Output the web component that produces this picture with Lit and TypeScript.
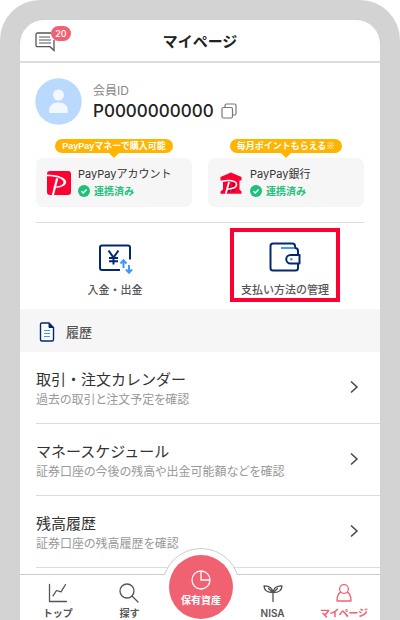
import { LitElement, html, css, svg } from "lit";
import { customElement } from "lit/decorators.js";

const check = html`<svg width="12" height="12" viewBox="0 0 12 12" aria-hidden="true">
  <circle cx="6" cy="6" r="6" fill="#1fc07a" />
  <path d="M3.4 6.2l1.8 1.8 3.4-3.6" fill="none" stroke="#fff" stroke-width="1.4" />
</svg>`;

const payLogo = html`<svg width="24" height="24" viewBox="0 0 24 24" aria-hidden="true">
  <rect width="24" height="24" rx="3" fill="#ff0033" />
  <path d="M0 3.500C9 3.500 19 6.200 19.200 10.900C19.300 15 12.500 17 6.500 16.600L6.700 15.600C12 15.700 16.600 14.200 16.500 11C16.300 7.300 8 5 0 5.200z" fill="#fff" />
  <path d="M9 7.200L11.300 7.400L7 24H4.800z" fill="#fff" />
</svg>`;

const bankLogo = html`<svg width="24" height="24" viewBox="0 0 24 24" aria-hidden="true">
  <path d="M12 1.500L22.500 6V9.500H20.500V18.500L22.500 20.500V22.800H1.500V20.500L4 18.500V9.500H1.500V6z" fill="#ff0033" />
  <path d="M8 12h3v9H8zM13 12h3v9h-3z" fill="#c80028" />
  <path d="M3.500 10.200C9 8.800 17.500 9.500 17.500 13.400C17.500 16.600 13 18.200 7.500 18" fill="none" stroke="#fff" stroke-width="1.500" />
  <path d="M10 11L6.800 22.800" fill="none" stroke="#fff" stroke-width="1.800" />
</svg>`;

const cards = [
  { tag: "PayPayマネーで購入可能", name: "PayPayアカウント", logo: payLogo },
  { tag: "毎月ポイントもらえる※", name: "PayPay銀行", logo: bankLogo },
];

const rows = [
  { title: "取引・注文カレンダー", note: "過去の取引と注文予定を確認" },
  { title: "マネースケジュール", note: "証券口座の今後の残高や出金可能額などを確認" },
  { title: "残高履歴", note: "証券口座の残高履歴を確認" },
];

const tabIcon = (shape: unknown) => html`<svg class="tab-icon" width="20" height="20" viewBox="0 0 20 20"
  fill="none" stroke="currentColor" stroke-width="1.300" stroke-linejoin="round" stroke-linecap="round" aria-hidden="true">${shape}</svg>`;

const icons = {
  chart: svg`<path d="M1.500 1.500V18.500H18.500M5 12.800L8.500 7.500L13 8.800L17.500 1.500" />`,
  search: svg`<circle cx="8" cy="8" r="7" /><path d="M13 13L19 19" />`,
  sprout: svg`<path d="M10 18.500V10C9.500 5 6 2.600 1 2.800C1 7.500 4.500 9.700 10 9.700C15.500 9.700 19 7.500 19 2.800C14 2.600 10.500 5 10 9.700M5.500 5.500L10 9.700L14.500 5.500" />`,
  person: svg`<circle cx="10" cy="6" r="4.400" /><path d="M6.800 9.200C4 10.600 3 13 3 18H17C17 13 16 10.600 13.200 9.200" />`,
};

@customElement("app-root")
export class AppRoot extends LitElement {
  static styles = css`
    :host {
      display: block;
      background: #fff;
      color: #333;
      font-family: Inter, "Noto Sans CJK JP", sans-serif;
    }
    * { box-sizing: border-box; }
    svg { display: block; flex: none; }
    h1, h2, p, ul, dl, dd { margin: 0; padding: 0; }
    ul { list-style: none; }
    a { color: inherit; text-decoration: none; }
    button {
      margin: 0; padding: 0; border: 0; background: none;
      color: inherit; font: inherit; cursor: pointer;
    }
    .bezel {
      min-height: 100vh;
      display: flex;
      padding: 20px 20px 0;
      background: #d3d3d3;
      border-radius: 40px 40px 0 0;
      overflow: hidden;
    }
    .screen {
      flex: 1;
      min-width: 0;
      display: flex;
      flex-direction: column;
      background: #fff;
      border-radius: 24px 24px 0 0;
      overflow: hidden;
    }
    .header {
      display: grid;
      grid-template-columns: 56px 1fr 56px;
      align-items: center;
      height: 43px;
      padding-top: 2px;
      border-bottom: 2px solid #ddd;
    }
    .header h1 {
      font-size: 15px;
      line-height: 20px;
      font-weight: 700;
      text-align: center;
      color: #222;
    }
    .messages { position: relative; width: 24px; margin-left: 14px; color: #555; }
    .badge {
      position: absolute;
      left: 17px;
      top: -6px;
      width: 20px;
      border-radius: 8px;
      background: #f06272;
      color: #fff;
      font-size: 9px;
      line-height: 15px;
      font-weight: 500;
      text-align: center;
    }
    .profile {
      display: flex;
      align-items: center;
      gap: 11px;
      padding: 15px 15px 14px;
    }
    .profile dt { font-size: 12px; line-height: 18px; color: #888; }
    .profile dd {
      display: flex;
      align-items: center;
      gap: 7px;
      font-size: 17px;
      line-height: 22px;
      font-weight: 500;
      color: #222;
    }
    .cards {
      display: grid;
      grid-template-columns: 1fr 1fr;
      gap: 16px;
      margin: 0 16px;
      padding-bottom: 15px;
      border-bottom: 1px solid #ddd;
    }
    .linked { display: flex; flex-direction: column; align-items: center; }
    .tag {
      padding: 0 7px;
      border-radius: 7px;
      background: #ffb400;
      color: #fff;
      font-family: "Liberation Sans", "Noto Sans CJK JP", sans-serif;
      font-size: 9px;
      line-height: 14px;
      font-weight: 700;
      white-space: nowrap;
    }
    .tip { border: 5px solid transparent; border-top-color: #ffb400; border-bottom: 0; }
    .card {
      align-self: stretch;
      display: flex;
      align-items: center;
      gap: 7px;
      height: 49px;
      padding: 0 11px;
      border-radius: 7px;
      background: #f6f6f6;
      text-align: left;
      font-size: 11px;
      line-height: 16px;
    }
    .card strong {
      display: flex;
      align-items: center;
      gap: 4px;
      font-size: 10px;
      line-height: 18px;
      color: #1fc07a;
      font-weight: 700;
    }
    .name, .state { display: block; white-space: nowrap; }
    .actions {
      display: grid;
      grid-template-columns: 1fr 1fr;
      justify-items: center;
      padding: 5px 10px 7px;
    }
    .action {
      display: flex;
      flex-direction: column;
      align-items: center;
      justify-content: space-between;
      width: 110px;
      height: 74px;
      padding: 10px 0 0;
      border: 4px solid transparent;
      font-size: 11px;
      line-height: 16px;
      font-weight: 500;
      color: #555;
      white-space: nowrap;
    }
    .marked { border-color: #ff0033; }
    .section {
      display: flex;
      align-items: center;
      gap: 10px;
      height: 43px;
      padding: 2px 18px 0;
      background: #f6f6f6;
      font-size: 13px;
      line-height: 20px;
      font-weight: 500;
      color: #555;
    }
    .row {
      display: flex;
      align-items: center;
      justify-content: space-between;
      height: 72px;
      margin-left: 16px;
      padding: 0 21px 1px 0;
      border-bottom: 1px solid #ddd;
      font-size: 15px;
      line-height: 22px;
    }
    .row small {
      display: block;
      font-feature-settings: "palt";
      font-size: 12px;
      line-height: 18px;
      color: #999;
    }
    .row span { display: block; padding-top: 3px; }
    .tabs {
      position: relative;
      display: grid;
      grid-template-columns: repeat(5, 1fr);
      height: 46px;
      margin-top: auto;
      padding-left: 2px;
      border-top: 1px solid #ccc;
      background: #fff;
    }
    .tab {
      display: flex;
      flex-direction: column;
      align-items: center;
      gap: 3px;
      padding-top: 8px;
      font-size: 10px;
      line-height: 14px;
      font-weight: 600;
      color: #555;
      white-space: nowrap;
    }
    .current { color: #f06272; font-feature-settings: "palt"; }
    .center { position: relative; }
    .ring {
      position: absolute;
      left: 50%;
      top: -27px;
      width: 78px;
      height: 78px;
      margin-left: -39px;
      border: 1px solid #ccc;
      border-radius: 50%;
      background: #fff;
      clip-path: inset(0 0 51px 0);
    }
    .plate {
      position: absolute;
      left: 50%;
      top: -20px;
      display: flex;
      flex-direction: column;
      align-items: center;
      gap: 3px;
      width: 64px;
      height: 64px;
      margin-left: -32px;
      padding-top: 15px;
      border-radius: 50%;
      background: #f06272;
      color: #fff;
      font-size: 10px;
      line-height: 14px;
      font-weight: 700;
      white-space: nowrap;
    }
  `;

  render() {
    return html`
      <div class="bezel">
        <div class="screen">
          <header class="header">
            <button class="messages" aria-label="お知らせ">
              <svg width="22" height="20" viewBox="0 0 22 20" fill="none" stroke="currentColor" stroke-width="1.300" aria-hidden="true">
                <path d="M20 8V18.500L16 14.700H3.500Q2 14.700 2 13.200V2.500Q2 1 3.500 1H17" />
                <path d="M5 5h11M5 8h12M5 11h12" stroke-width="1" />
              </svg>
              <span class="badge">20</span>
            </button>
            <h1>マイページ</h1>
          </header>
          <main>
            <div class="profile">
              <svg width="47" height="47" viewBox="0 0 47 47" aria-hidden="true">
                <circle cx="23.500" cy="23.500" r="23.200" fill="#b9d9ff" />
                <circle cx="23.500" cy="17" r="5.500" fill="#f3f8ff" />
                <path d="M14 33.500C14 27.500 17.500 24.500 23.500 24.500S33 27.500 33 33.500Q33 35 31.500 35H15.500Q14 35 14 33.500z" fill="#f3f8ff" />
              </svg>
              <dl>
                <dt>会員ID</dt>
                <dd>
                  P0000000000
                  <button aria-label="コピー">
                    <svg width="16" height="16" viewBox="0 0 16 16" fill="none" stroke="#777" stroke-width="1.200" aria-hidden="true">
                      <rect x="1" y="4.500" width="10.500" height="10.500" rx="1.500" />
                      <path d="M4 4.500V2.500Q4 1 5.500 1H13.500Q15 1 15 2.500V10.500Q15 12 13.500 12H11.500" />
                    </svg>
                  </button>
                </dd>
              </dl>
            </div>
            <div class="cards">
              ${cards.map(
                (c) => html`<div class="linked">
                  <span class="tag">${c.tag}</span>
                  <span class="tip"></span>
                  <button class="card">
                    ${c.logo}
                    <span class="state">
                      <span class="name">${c.name}</span>
                      <strong>${check}連携済み</strong>
                    </span>
                  </button>
                </div>`
              )}
            </div>
            <div class="actions">
              <button class="action">
                <svg width="36" height="32" viewBox="0 0 36 32" fill="none" aria-hidden="true">
                  <path d="M23 28H5Q3 28 3 26V5.500Q3 3.500 5 3.500H31Q33 3.500 33 5.500V17.500" stroke="#04286f" stroke-width="2" />
                  <path d="M11.500 8.500L16.500 15.500L21.500 8.500M16.500 15.500V22.500M12 16H21M12 19.300H21" stroke="#04286f" stroke-width="2" />
                  <path d="M26.500 26V19M23.500 21.500L26.500 18.300L29.500 21.500M32 23V30M29 27.500L32 30.700L35 27.500" stroke="#4098ff" stroke-width="2" />
                </svg>
                入金・出金
              </button>
              <button class="action marked">
                <svg width="32" height="32" viewBox="0 0 32 32" fill="none" stroke="#04286f" stroke-width="2" stroke-linejoin="round" aria-hidden="true">
                  <path d="M29 13V9Q29 6 26 6V4Q26 1.500 23.500 1.500H4Q1.500 1.500 1.500 4V26Q1.500 28.500 4 28.500H26.500Q29 28.500 29 26V21.500" />
                  <path d="M30.500 13H21.500A4.200 4.200 0 0 0 21.500 21.500H30.500z" />
                  <path d="M12 6H25.500" stroke="#4098ff" />
                  <circle cx="22.300" cy="17.200" r="1.300" fill="#4098ff" stroke="none" />
                </svg>
                支払い方法の管理
              </button>
            </div>
            <h2 class="section">
              <svg width="18" height="20" viewBox="0 0 18 20" fill="none" aria-hidden="true">
                <path d="M11 1H4Q2.500 1 2.500 2.500V17.500Q2.500 19 4 19H14Q15.500 19 15.500 17.500V5.500z" stroke="#04286f" stroke-width="1.400" fill="#fff" />
                <path d="M11 1V5.500H15.500z" fill="#04286f" stroke="#04286f" />
                <path d="M6 8.500H12M6 11.500H12M6 14.500H12" stroke="#4098ff" stroke-width="1.200" />
              </svg>
              履歴
            </h2>
            <ul>
              ${rows.map(
                (r) => html`<li>
                  <a class="row" href="#">
                    <span>${r.title}<small>${r.note}</small></span>
                    <svg width="10" height="14" viewBox="0 0 10 14" fill="none" stroke="#444" stroke-width="1.500" aria-hidden="true">
                      <path d="M2 1.500L8 7L2 12.500" />
                    </svg>
                  </a>
                </li>`
              )}
            </ul>
          </main>
          <nav class="tabs">
            <a class="tab" href="#">${tabIcon(icons.chart)}トップ</a>
            <a class="tab" href="#">${tabIcon(icons.search)}探す</a>
            <a class="center" href="#">
              <span class="ring"></span>
              <span class="plate">
                <svg width="20" height="20" viewBox="0 0 20 20" fill="none" stroke="currentColor" stroke-width="1.300" aria-hidden="true">
                  <circle cx="10" cy="10" r="9" /><path d="M10 1V10H19" />
                </svg>
                保有資産
              </span>
            </a>
            <a class="tab" href="#">${tabIcon(icons.sprout)}NISA</a>
            <a class="tab current" href="#" aria-current="page">${tabIcon(icons.person)}マイページ</a>
          </nav>
        </div>
      </div>
    `;
  }
}
